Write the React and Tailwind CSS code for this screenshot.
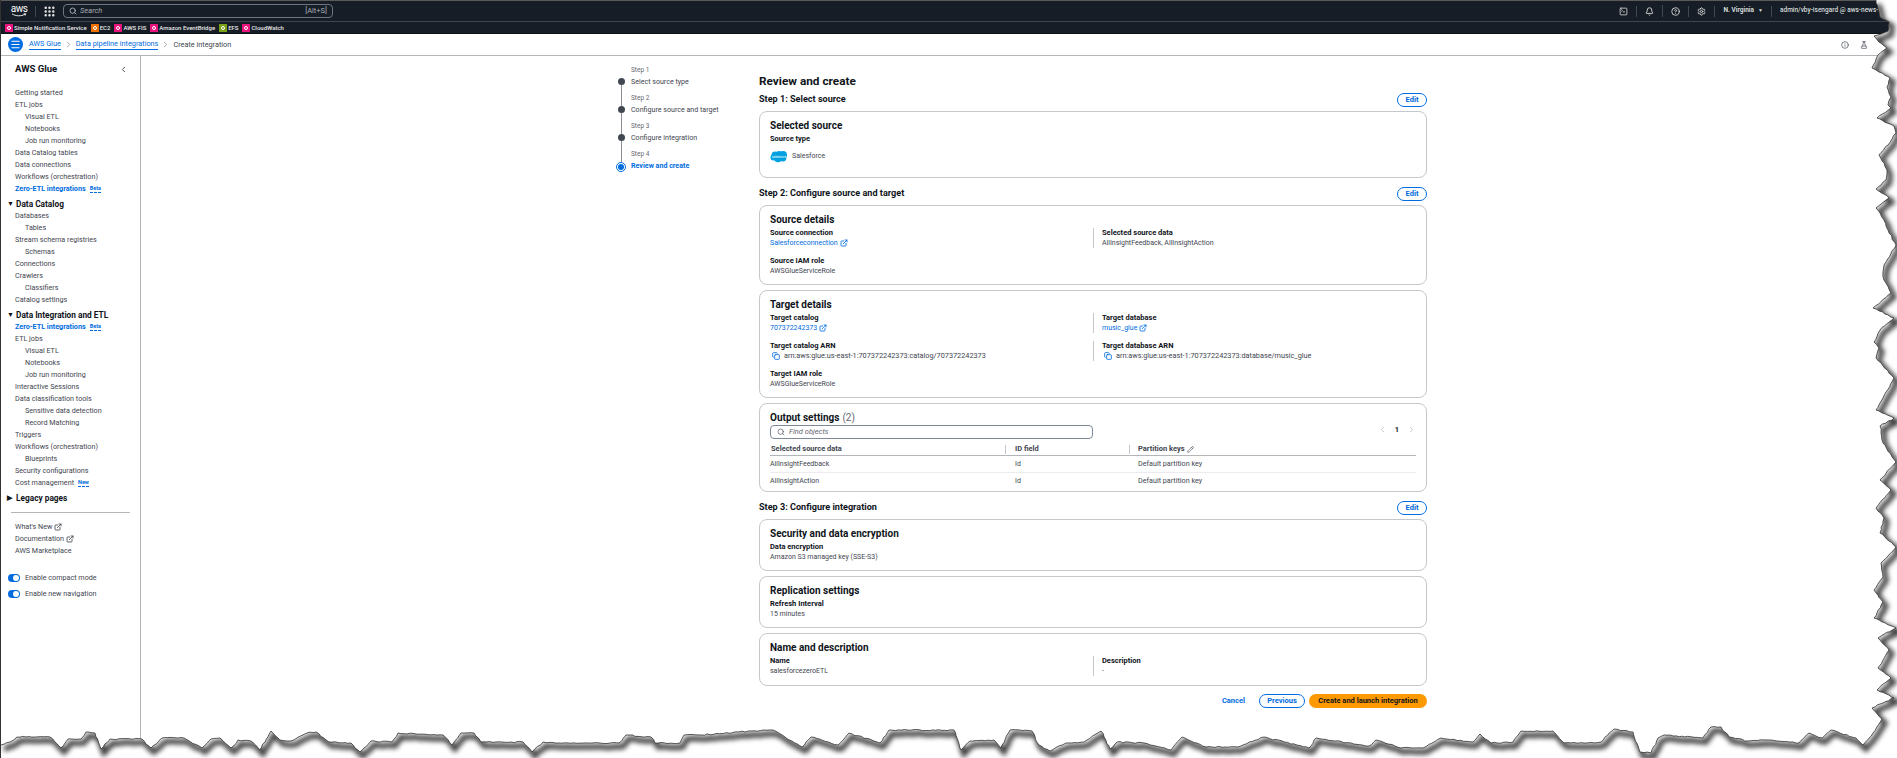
import React from "react";
import {
  Bell,
  ChevronLeft,
  ChevronRight,
  CircleHelp,
  Copy,
  ExternalLink,
  FlaskConical,
  Grip,
  Info,
  Menu,
  Pencil,
  Search,
  Settings,
  SquareTerminal,
} from "lucide-react";

const tear = [
  [1875, 0], [1875, 3], [1878, 12], [1879, 17], [1888, 22], [1887, 31], [1873, 36], [1878, 42], [1886, 48], [1877, 55],
  [1871, 68], [1878, 72], [1889, 78], [1886, 87], [1890, 97], [1887, 105], [1890, 108], [1876, 118], [1893, 126], [1895, 133],
  [1887, 145], [1878, 155], [1886, 170], [1885, 180], [1875, 189], [1888, 198], [1875, 208], [1883, 220], [1887, 230], [1895, 245],
  [1883, 265], [1882, 272], [1883, 280], [1890, 293], [1872, 308], [1893, 318], [1879, 330], [1873, 342], [1878, 348],
  [1875, 358], [1893, 378], [1882, 398], [1875, 410], [1893, 418], [1879, 426], [1882, 443], [1895, 462], [1879, 480], [1890, 490],
  [1875, 508], [1883, 518], [1879, 533], [1895, 547], [1880, 563], [1882, 577], [1873, 590], [1882, 602], [1873, 618], [1895, 628],
  [1877, 638], [1888, 650], [1877, 668], [1890, 678], [1876, 690], [1893, 698], [1871, 708], [1881, 719], [1872, 733], [1862, 745],
  [1855, 738], [1830, 730], [1821, 738], [1808, 733], [1798, 743], [1767, 740], [1747, 741], [1728, 737], [1720, 727], [1710, 727],
  [1702, 738], [1663, 735], [1657, 738], [1650, 753], [1639, 752], [1632, 732], [1613, 729], [1600, 742], [1583, 743], [1563, 743],
  [1552, 731], [1520, 731], [1512, 742], [1490, 743], [1479, 734], [1472, 742], [1440, 738], [1422, 748], [1400, 748], [1375, 740],
  [1368, 746], [1315, 738], [1308, 748], [1263, 737], [1237, 747], [1205, 747], [1181, 737], [1170, 750], [1143, 743], [1116, 742],
  [1109, 749], [1100, 731], [1083, 742], [1065, 743], [1049, 751], [1038, 745], [1031, 731], [1009, 730], [1000, 748], [993, 740],
  [969, 741], [960, 750], [953, 730], [888, 730], [879, 743], [848, 733], [837, 745], [810, 737], [801, 747], [772, 730],
  [750, 731], [700, 735], [683, 735], [679, 743], [654, 743], [650, 737], [625, 735], [618, 743], [558, 743], [542, 742],
  [531, 752], [522, 742], [480, 742], [473, 733], [460, 733], [451, 745], [442, 735], [397, 733], [391, 742], [370, 741],
  [359, 752], [350, 743], [328, 742], [315, 732], [306, 733], [290, 741], [279, 740], [270, 731], [259, 750], [250, 741],
  [237, 740], [230, 748], [219, 738], [210, 739], [201, 748], [183, 738], [161, 738], [150, 748], [141, 739], [109, 739],
  [100, 749], [94, 733], [85, 732], [80, 739], [67, 739], [60, 748], [49, 737], [16, 737], [9, 742], [0, 745],
];

// break each segment into short jittered steps so the edge looks ripped
const roughen = (points) => {
  const out = [];
  let seed = 1;
  points.forEach((p, i) => {
    const next = points[i + 1];
    out.push(p);
    if (!next) return;
    const steps = Math.floor(Math.hypot(next[0] - p[0], next[1] - p[1]) / 3);
    for (let s = 1; s < steps; s++) {
      const r = Math.sin(seed++ * 12.9898) * 43758.5453;
      const j = (r - Math.floor(r) - 0.5) * 1.2;
      const r2 = Math.sin(seed++ * 78.233) * 43758.5453;
      const j2 = (r2 - Math.floor(r2) - 0.5) * 1.2;
      out.push([p[0] + ((next[0] - p[0]) * s) / steps + j, p[1] + ((next[1] - p[1]) * s) / steps + j2]);
    }
  });
  return out.map((p) => `${p[0].toFixed(1)} ${p[1].toFixed(1)}`).join(" L");
};

const edge = "M" + roughen(tear);
const outside = edge + " L0 758 L1897 758 L1897 0 Z";

const TornEdge = () => (
  <svg className="absolute inset-0 pointer-events-none" width="1897" height="758" viewBox="0 0 1897 758">
    <defs>
      <filter id="soft" x="-5%" y="-5%" width="110%" height="110%">
        <feGaussianBlur stdDeviation="2.4" />
      </filter>
      <clipPath id="outer">
        <path d={outside} />
      </clipPath>
    </defs>
    <path d={outside} fill="#fff" />
    <g clipPath="url(#outer)">
      <path d={edge} transform="translate(3 4)" fill="none" stroke="#000" strokeOpacity="0.8" strokeWidth="5" filter="url(#soft)" />
    </g>
    <path d={edge} fill="none" stroke="#2f2f2f" strokeWidth="0.8" />
  </svg>
);

const favorites = [
  { name: "Simple Notification Service", color: "bg-[#e7157b]" },
  { name: "EC2", color: "bg-[#ed7100]" },
  { name: "AWS FIS", color: "bg-[#e7157b]" },
  { name: "Amazon EventBridge", color: "bg-[#e7157b]" },
  { name: "EFS", color: "bg-[#7aa116]" },
  { name: "CloudWatch", color: "bg-[#e7157b]" },
];

const TopBar = () => (
  <header className="bg-[#161d26] text-white">
    <div className="h-[22px] flex items-center border-t border-b border-t-[#5a5a5a] border-b-[#3f4650]">
      <div className="w-[34px] flex flex-col items-center pl-[2px]">
        <span className="text-[10px] leading-[8px] tracking-[-0.5px]">aws</span>
        <svg width="16" height="4" viewBox="0 0 16 4">
          <path d="M1 .8C5 3.4 10 3.4 14 1.2" fill="none" stroke="#fff" strokeWidth="0.9" />
          <path d="M12.6.8l2.2-.2-.7 2" fill="none" stroke="#fff" strokeWidth="0.8" />
        </svg>
      </div>
      <div className="w-px h-[11px] bg-[#414750]" />
      <Grip size={13} strokeWidth={2.6} className="ml-[7px] text-[#e8e8e8]" />
      <div className="ml-[7px] w-[270px] h-[14px] rounded-[4px] border border-[#6f7680] flex items-center px-[5px]">
        <Search size={8} className="text-[#c6c6cd]" strokeWidth={2.4} />
        <span className="ml-[3px] text-[7.5px] italic text-[#a8adb5]">Search</span>
        <span className="ml-auto text-[7.5px] text-[#a8adb5]">[Alt+S]</span>
      </div>
      <div className="ml-auto flex items-center text-[#e8e8e8]">
        <SquareTerminal size={9} strokeWidth={2} />
        <div className="w-px h-[11px] bg-[#414750] mx-[8px]" />
        <Bell size={9} strokeWidth={2.2} />
        <div className="w-px h-[12px] bg-[#414750] mx-[8px]" />
        <CircleHelp size={9} strokeWidth={2.2} />
        <div className="w-px h-[11px] bg-[#414750] mx-[8px]" />
        <Settings size={9} strokeWidth={2.2} />
        <div className="w-px h-[11px] bg-[#414750] mx-[8px]" />
        <span className="text-[6.5px] font-bold text-[#d5dbdb] mr-[2px]">N. Virginia</span>
        <span className="text-[5px] ml-[2px] text-[#d5dbdb]">▼</span>
        <div className="w-px h-[11px] bg-[#414750] mx-[8px]" />
        <span className="w-[117px] whitespace-nowrap overflow-hidden text-[6.5px] font-medium text-[#d5dbdb] mr-0">admin/vby-isengard @ aws-news-2025</span>
      </div>
    </div>
    <div className="h-[12px] flex items-center pl-[4px] gap-[4px] border-b border-[#0d1117]">
      {favorites.map((f) => (
        <div key={f.name} className="flex items-center gap-[1px]">
          <span className={`w-[8px] h-[8px] ${f.color} flex items-center justify-center`}>
            <span className="w-[4px] h-[4px] rounded-full border-[0.5px] border-white" />
          </span>
          <span className="text-[6px] font-medium whitespace-nowrap text-[#e8e8e8]">{f.name}</span>
        </div>
      ))}
    </div>
  </header>
);

const Crumbs = () => (
  <div className="h-[22px] flex items-center border-b border-[#b4b4bb] bg-white pl-[7px] pr-[29px] shrink-0">
    <span className="w-[15px] h-[15px] rounded-full bg-[#006ce0] flex items-center justify-center">
      <Menu size={11} className="text-white" strokeWidth={2.4} />
    </span>
    <span className="ml-[6px] text-[7.3px] text-[#006ce0] border-b border-[#006ce0] leading-[10px]">AWS Glue</span>
    <ChevronRight size={9} className="mx-[3px] text-[#8c8c94]" />
    <span className="text-[7.3px] text-[#006ce0] border-b border-[#006ce0] leading-[10px]">Data pipeline integrations</span>
    <ChevronRight size={9} className="mx-[3px] text-[#8c8c94]" />
    <span className="text-[7.3px] text-[#424650] leading-[10px]">Create integration</span>
    <Info size={8} className="ml-auto text-[#424650]" />
    <FlaskConical size={8} className="ml-[11px] text-[#424650]" />
  </div>
);

const NavItem = ({ sub, active, badge, ext, children }) => (
  <div
    className={`h-3 flex items-center whitespace-nowrap text-[7.2px] ${sub ? "pl-[24px]" : "pl-[14px]"} ${
      active ? "text-[#006ce0] font-bold" : "text-[#424650]"
    }`}
  >
    {children}
    {badge && <span className="ml-[4px] text-[5.5px] font-bold text-[#006ce0] border-b border-dashed border-[#006ce0] leading-[7px]">{badge}</span>}
    {ext && <ExternalLink size={8} strokeWidth={2.5} className="ml-[2px]" />}
  </div>
);

const NavHead = ({ open, children }) => (
  <div className="h-3 mt-[3px] flex items-center whitespace-nowrap text-[8.3px] font-bold text-[#0f141a]">
    <span className="w-[15px] pl-[6px] text-[7px] leading-none">{open ? "▼" : "▶"}</span>
    {children}
  </div>
);

const Toggle = ({ children }) => (
  <div className="h-4 flex items-center pl-[7px]">
    <span className="w-[12px] h-[8px] rounded-full bg-[#006ce0] flex items-center justify-end pr-[1px]">
      <span className="w-[6px] h-[6px] rounded-full bg-white" />
    </span>
    <span className="ml-[5px] text-[7.2px] text-[#424650]">{children}</span>
  </div>
);

const Sidebar = () => (
  <aside className="w-[140px] shrink-0 border-r border-[#b4b4bb] bg-white">
    <div className="h-[26px] mb-[5px] flex items-center justify-between pl-[14px] pr-[12px]">
      <span className="text-[9.5px] font-bold text-[#0f141a]">AWS Glue</span>
      <ChevronLeft size={9} className="text-[#424650]" strokeWidth={2.4} />
    </div>
    <NavItem>Getting started</NavItem>
    <NavItem>ETL jobs</NavItem>
    <NavItem sub>Visual ETL</NavItem>
    <NavItem sub>Notebooks</NavItem>
    <NavItem sub>Job run monitoring</NavItem>
    <NavItem>Data Catalog tables</NavItem>
    <NavItem>Data connections</NavItem>
    <NavItem>Workflows (orchestration)</NavItem>
    <NavItem active badge="Beta">Zero-ETL integrations</NavItem>
    <NavHead open>Data Catalog</NavHead>
    <NavItem>Databases</NavItem>
    <NavItem sub>Tables</NavItem>
    <NavItem>Stream schema registries</NavItem>
    <NavItem sub>Schemas</NavItem>
    <NavItem>Connections</NavItem>
    <NavItem>Crawlers</NavItem>
    <NavItem sub>Classifiers</NavItem>
    <NavItem>Catalog settings</NavItem>
    <NavHead open>Data Integration and ETL</NavHead>
    <NavItem active badge="Beta">Zero-ETL integrations</NavItem>
    <NavItem>ETL jobs</NavItem>
    <NavItem sub>Visual ETL</NavItem>
    <NavItem sub>Notebooks</NavItem>
    <NavItem sub>Job run monitoring</NavItem>
    <NavItem>Interactive Sessions</NavItem>
    <NavItem>Data classification tools</NavItem>
    <NavItem sub>Sensitive data detection</NavItem>
    <NavItem sub>Record Matching</NavItem>
    <NavItem>Triggers</NavItem>
    <NavItem>Workflows (orchestration)</NavItem>
    <NavItem sub>Blueprints</NavItem>
    <NavItem>Security configurations</NavItem>
    <NavItem badge="New">Cost management</NavItem>
    <NavHead>Legacy pages</NavHead>
    <div className="my-2 mx-[10px] h-px bg-[#b4b4bb]" />
    <NavItem ext>What's New</NavItem>
    <NavItem ext>Documentation</NavItem>
    <NavItem>AWS Marketplace</NavItem>
    <div className="mt-[13px]">
      <Toggle>Enable compact mode</Toggle>
      <Toggle>Enable new navigation</Toggle>
    </div>
  </aside>
);

const steps = ["Select source type", "Configure source and target", "Configure integration", "Review and create"];

const Stepper = () => (
  <ol className="w-[143px] shrink-0 pt-[9px]">
    {steps.map((s, i) => {
      const last = i === steps.length - 1;
      return (
        <li key={s} className="h-7 flex">
          <div className="w-[10px] flex flex-col items-center">
            <span className={`w-px flex-1 ${i === 0 ? "bg-transparent" : "bg-[#8c8c94]"}`} />
            {last ? (
              <span className="w-[10px] h-[10px] rounded-full border border-[#006ce0] flex items-center justify-center">
                <span className="w-[6px] h-[6px] rounded-full bg-[#006ce0]" />
              </span>
            ) : (
              <span className="w-[7px] h-[7px] rounded-full bg-[#414750]" />
            )}
            <span className={`w-px ${last ? "h-[5px] bg-transparent" : "h-[8px] bg-[#8c8c94]"}`} />
          </div>
          <div className="ml-[5px]">
            <div className="h-3 flex items-center text-[6.5px] text-[#656871]">Step {i + 1}</div>
            <div className={`h-[10px] flex items-center whitespace-nowrap text-[7.1px] ${last ? "font-bold text-[#006ce0]" : "text-[#424650]"}`}>{s}</div>
          </div>
        </li>
      );
    })}
  </ol>
);

const Card = ({ title, count, children, className }) => (
  <section className={`border border-[#c6c6cd] rounded-[8px] px-[10px] pt-[6px] ${className}`}>
    <h3 className="h-[14px] flex items-center text-[10px] font-bold text-[#0f141a] whitespace-nowrap">
      {title}
      {count && <span className="ml-[3px] font-normal text-[#656871]">{count}</span>}
    </h3>
    {children}
  </section>
);

const Label = ({ children }) => <div className="h-[10px] flex items-center text-[7.5px] font-bold text-[#0f141a] whitespace-nowrap">{children}</div>;

const Value = ({ link, copy, children }) => (
  <div className={`h-[10px] flex items-center whitespace-nowrap ${copy ? "text-[7.3px]" : "text-[7px]"} ${link ? "text-[#006ce0]" : "text-[#424650]"}`}>
    {copy && <Copy size={8} strokeWidth={2.5} className="ml-[2px] mr-[4px] text-[#006ce0]" />}
    {children}
    {link && <ExternalLink size={8} strokeWidth={2.5} className="ml-[2px]" />}
  </div>
);

const Field = ({ label, value, link, copy, divided, className = "" }) => (
  <div className={`${divided ? "border-l border-[#c6c6cd] pl-[8px]" : ""} ${className}`}>
    <Label>{label}</Label>
    <Value link={link} copy={copy}>{value}</Value>
  </div>
);

const StepHead = ({ children, first }) => (
  <div className={`h-[14px] mb-[4px] flex items-center justify-between ${first ? "mt-[3px]" : "mt-[9px]"}`}>
    <h2 className="text-[9.1px] font-bold text-[#0f141a]">{children}</h2>
    <button className="w-[30px] h-[14px] rounded-full border-[1.5px] border-[#006ce0] text-[7.5px] font-bold text-[#006ce0] flex items-center justify-center">Edit</button>
  </div>
);

const SalesforceLogo = () => (
  <svg width="18" height="13" viewBox="0 0 18 13">
    <g fill="#00a1e0">
      <circle cx="5" cy="5" r="3.5" />
      <circle cx="9" cy="4" r="3" />
      <circle cx="13" cy="5" r="4" />
      <circle cx="3.5" cy="7.5" r="3" />
      <circle cx="8" cy="8.5" r="3.8" />
      <circle cx="13" cy="8" r="3.4" />
    </g>
    <text x="9" y="7.5" textAnchor="middle" fontSize="3" fill="#fff" fontFamily="Roboto, sans-serif">salesforce</text>
  </svg>
);

const rows = ["AllInsightFeedback", "AllInsightAction"];

const OutputTable = () => (
  <>
    <div className="flex items-start mt-[1px]">
      <div className="w-[323px] h-[14px] rounded-[4px] border border-[#7d8998] flex items-center px-[6px]">
        <Search size={8} className="text-[#656871]" strokeWidth={2.4} />
        <span className="ml-[4px] text-[7.5px] italic text-[#656871]">Find objects</span>
      </div>
      <div className="ml-auto flex items-center text-[#b4b4bb] -mt-[1px]">
        <ChevronLeft size={9} />
        <span className="mx-[8px] text-[7.5px] font-bold text-[#0f141a]">1</span>
        <ChevronRight size={9} />
      </div>
    </div>
    <div>
      <div className="h-[13px] mt-[4px] grid grid-cols-[235px_124px_1fr] items-center border-b border-[#b4b4bb] text-[7.5px] font-bold text-[#424650]">
        <div className="pl-[1px]">Selected source data</div>
        <div className="border-l border-[#c6c6cd] pl-[9px] h-[9px] flex items-center">ID field</div>
        <div className="border-l border-[#c6c6cd] pl-[8px] h-[9px] flex items-center">Partition keys<Pencil size={7} className="ml-[2px]" /></div>
      </div>
      {rows.map((r, i) => (
        <div key={r} className={`h-[17px] grid grid-cols-[235px_124px_1fr] items-center text-[7px] text-[#424650] ${i === 0 ? "border-b border-[#ebebf0]" : ""}`}>
          <div>{r}</div>
          <div className="pl-[10px]">Id</div>
          <div className="pl-[9px] text-[7.2px]">Default partition key</div>
        </div>
      ))}
    </div>
  </>
);

const Review = () => (
  <div className="w-[668px] shrink-0 pt-[18px]">
    <h1 className="h-4 flex items-center text-[11.8px] font-bold text-[#0f141a]">Review and create</h1>

    <StepHead first>Step 1: Select source</StepHead>
    <Card title="Selected source" className="h-[67px]">
      <div className="mt-[2px]"><Label>Source type</Label></div>
      <div className="mt-[6px] flex items-center gap-[4px] text-[7px] text-[#424650]">
        <SalesforceLogo />
        Salesforce
      </div>
    </Card>

    <StepHead>Step 2: Configure source and target</StepHead>
    <div className="flex flex-col gap-[5px]">
      <Card title="Source details" className="h-[80px]">
        <div className="mt-[2px] grid grid-cols-[323px_1fr] gap-y-2">
          <Field label="Source connection" value="Salesforceconnection" link />
          <Field label="Selected source data" value="AllInsightFeedback, AllInsightAction" divided />
          <Field label="Source IAM role" value="AWSGlueServiceRole" />
        </div>
      </Card>
      <Card title="Target details" className="h-[108px]">
        <div className="mt-[2px] grid grid-cols-[323px_1fr] gap-y-2">
          <Field label="Target catalog" value="707372242373" link />
          <Field label="Target database" value="music_glue" link divided />
          <Field label="Target catalog ARN" value="arn:aws:glue:us-east-1:707372242373:catalog/707372242373" copy />
          <Field label="Target database ARN" value="arn:aws:glue:us-east-1:707372242373:database/music_glue" copy divided />
          <Field label="Target IAM role" value="AWSGlueServiceRole" />
        </div>
      </Card>
      <Card title="Output settings" count="(2)" className="h-[89px]">
        <OutputTable />
      </Card>
    </div>

    <StepHead>Step 3: Configure integration</StepHead>
    <div className="flex flex-col gap-[5px]">
      <Card title="Security and data encryption" className="h-[52px]">
        <div className="mt-[2px]"><Field label="Data encryption" value="Amazon S3 managed key (SSE-S3)" /></div>
      </Card>
      <Card title="Replication settings" className="h-[52px]">
        <div className="mt-[2px]"><Field label="Refresh Interval" value="15 minutes" /></div>
      </Card>
      <Card title="Name and description" className="h-[53px]">
        <div className="mt-[2px] grid grid-cols-[323px_1fr]">
          <Field label="Name" value="salesforcezeroETL" />
          <Field label="Description" value="-" divided />
        </div>
      </Card>
    </div>

    <div className="mt-2 flex items-center justify-end text-[7.5px] font-bold">
      <button className="text-[#006ce0] mr-[14px]">Cancel</button>
      <button className="w-[46px] h-[14px] rounded-full border-[1.5px] border-[#006ce0] text-[#006ce0] mr-[4px]">Previous</button>
      <button className="w-[118px] h-[14px] rounded-full bg-[#ff9900] text-[#0f141a]">Create and launch integration</button>
    </div>
  </div>
);

export default function App() {
  return (
    <div className="relative w-[1897px] h-[758px] overflow-hidden bg-white flex flex-col border-l border-[#333] font-['Roboto',sans-serif]">
      <TopBar />
      <Crumbs />
      <div className="flex flex-1 min-h-0">
        <Sidebar />
        <main className="flex-1 flex pl-[475px]">
          <Stepper />
          <Review />
        </main>
      </div>
      <TornEdge />
    </div>
  );
}
